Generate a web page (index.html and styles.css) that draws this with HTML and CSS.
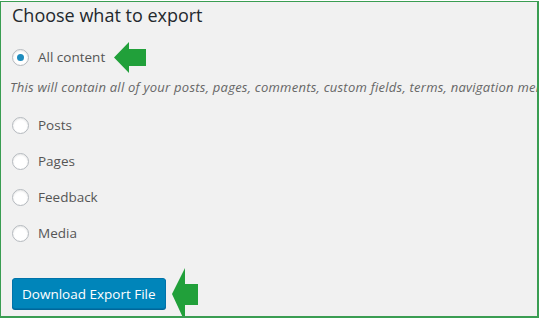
FILE: index.html
```html
<!DOCTYPE html>
<html>
<head>
    <title>Export</title>
    <link rel="stylesheet" href="styles.css">
</head>
<body>
    <div class="frame">
        <h2 class="heading">Choose what to export</h2>
        <label class="option">
            <span class="radio checked"></span>
            <span class="label">All content</span>
            <svg class="arrow arrow-top" width="33" height="33" viewBox="0 0 33 33">
                <polygon points="0,16.5 15,1 15,8 32,8 32,25 15,25 15,32" fill="#21a03a"/>
            </svg>
        </label>
        <p class="note">This will contain all of your posts, pages, comments, custom fields, terms, navigation menus, and custom posts.</p>
        <label class="option"><span class="radio"></span><span class="label">Posts</span></label>
        <label class="option"><span class="radio"></span><span class="label">Pages</span></label>
        <label class="option"><span class="radio"></span><span class="label">Feedback</span></label>
        <label class="option"><span class="radio"></span><span class="label">Media</span></label>
        <div class="actions">
            <button class="button">Download Export File</button>
            <svg class="arrow arrow-bottom" width="27" height="54" viewBox="0 0 27 54">
                <polygon points="0,26 13,0 13,16 26,16 26,37 13,37 13,54" fill="#21a03a"/>
            </svg>
        </div>
    </div>
</body>
</html>
```

FILE: styles.css
```css
body {
    margin: 0;
    background-color: #ffffff;
    font-family: 'Open Sans', sans-serif;
}
.frame {
    width: 539px;
    height: 317px;
    margin-top: 1px;
    border: 1px solid #3a9d52;
    border-right-width: 2px;
    border-bottom-width: 2px;
    background-color: #f1f1f1;
    overflow: hidden;
    box-sizing: border-box;
    padding: 0 0 0 11px;
}
.heading {
    margin: 0;
    font-size: 18px;
    font-weight: 400;
    color: #23282d;
    line-height: 26px;
}
.option {
    display: flex;
    align-items: center;
    height: 36px;
    color: #555;
    font-size: 13.5px;
}
.heading + .option {
    margin-top: 13px;
    height: 32px;
}
.radio {
    width: 15px;
    height: 15px;
    border: 1px solid #b4b9be;
    border-radius: 50%;
    background-color: #fff;
    box-shadow: inset 0 1px 2px rgba(0,0,0,0.1);
    margin-right: 9px;
    position: relative;
    flex-shrink: 0;
}
.checked::after {
    content: '';
    position: absolute;
    left: 4px;
    top: 4px;
    width: 7px;
    height: 7px;
    border-radius: 50%;
    background-color: #1e8cbe;
}
.arrow-top {
    margin-left: 9px;
}
.note {
    margin: 0 0 6px -2px;
    white-space: nowrap;
    font-style: italic;
    font-size: 13px;
    letter-spacing: 0.25px;
    color: #666;
    line-height: 28px;
    height: 28px;
}
.actions {
    display: flex;
    align-items: flex-start;
    margin-top: 27px;
}
.button {
    background-color: #0085ba;
    border: 1px solid #0073aa;
    border-radius: 3px;
    box-shadow: 0 1px 0 #006799;
    color: #fff;
    font-family: 'Open Sans', sans-serif;
    font-size: 13.5px;
    height: 31px;
    padding: 0 9px;
}
.arrow-bottom {
    margin-left: 6px;
    margin-top: -10px;
}
```
